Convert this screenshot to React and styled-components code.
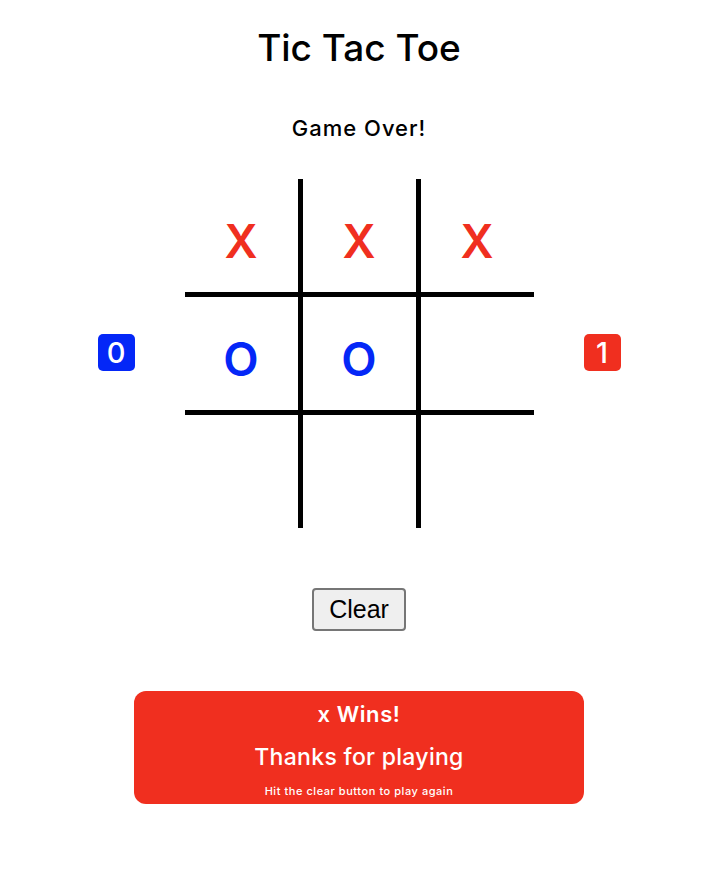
import React from "react";
import styled, { createGlobalStyle } from "styled-components";

const RED = "#f02f1f";
const BLUE = "#0427f7";

const GlobalStyle = createGlobalStyle`
  body {
    margin: 0;
    background: #fff;
    font-family: "Inter", "Noto Sans", sans-serif;
    color: #000;
  }
`;

const board = ["X", "X", "X", "O", "O", "", "", "", ""];

function App() {
  return (
    <Page>
      <GlobalStyle />
      <Title>Tic Tac Toe</Title>
      <Status>Game Over!</Status>
      <GameRow>
        <Score player="O">0</Score>
        <Board>
          {board.map((value, i) => (
            <Cell key={i} col={i % 3} row={Math.floor(i / 3)}>
              {value && <Mark player={value}>{value}</Mark>}
            </Cell>
          ))}
        </Board>
        <Score player="X">1</Score>
      </GameRow>
      <ClearButton>Clear</ClearButton>
      <WinPanel>
        <WinText>x Wins!</WinText>
        <Thanks>Thanks for playing</Thanks>
        <Hint>Hit the clear button to play again</Hint>
      </WinPanel>
    </Page>
  );
}

export default App;

const Page = styled.div`
  display: flex;
  flex-direction: column;
  align-items: center;
  padding: 26px 0 40px 6px;
`;

const Title = styled.h1`
  margin: 0;
  font-size: 37px;
  line-height: 44px;
  font-weight: 500;
`;

const Status = styled.p`
  margin: 45px 0 0;
  font-size: 22px;
  line-height: 26px;
  letter-spacing: 1px;
  font-weight: 500;
`;

const GameRow = styled.div`
  display: flex;
  align-items: center;
  gap: 50px;
  margin-top: 38px;
`;

const Score = styled.div`
  width: 37px;
  height: 37px;
  border-radius: 5px;
  display: flex;
  align-items: center;
  justify-content: center;
  background: ${(props) => (props.player === "O" ? BLUE : RED)};
  color: #fff;
  font-size: 29px;
  font-weight: 500;
  margin-top: -3px;
`;

const Board = styled.div`
  display: grid;
  grid-template-columns: repeat(3, auto);
`;

const Cell = styled.div`
  box-sizing: content-box;
  width: 113px;
  height: 113px;
  display: flex;
  align-items: center;
  justify-content: center;
  border-right: ${(props) => (props.col < 2 ? "5px solid #000" : "none")};
  border-bottom: ${(props) => (props.row < 2 ? "5px solid #000" : "none")};
`;

const Mark = styled.span`
  font-size: 46px;
  font-weight: 600;
  line-height: 1;
  margin-top: 11px;
  color: ${(props) => (props.player === "X" ? RED : BLUE)};
`;

const ClearButton = styled.button`
  margin-top: 60px;
  font-family: "Liberation Sans", Arial, sans-serif;
  font-size: 25px;
  line-height: 29px;
  padding: 5px 15px;
  background: #efefef;
  border: 2px solid #767676;
  border-radius: 4px;
  color: #000;
`;

const WinPanel = styled.div`
  margin-top: 60px;
  width: 450px;
  box-sizing: border-box;
  padding: 10px 0 6px;
  background: ${RED};
  border-radius: 12px;
  color: #fff;
  display: flex;
  flex-direction: column;
  align-items: center;
`;

const WinText = styled.div`
  font-size: 22px;
  line-height: 26px;
  letter-spacing: 0.6px;
  font-weight: 600;
`;

const Thanks = styled.div`
  margin-top: 16px;
  font-size: 23px;
  line-height: 28px;
  letter-spacing: 0.3px;
  font-weight: 500;
`;

const Hint = styled.div`
  margin-top: 13px;
  font-size: 11px;
  line-height: 14px;
  letter-spacing: 0.55px;
  font-weight: 500;
`;
